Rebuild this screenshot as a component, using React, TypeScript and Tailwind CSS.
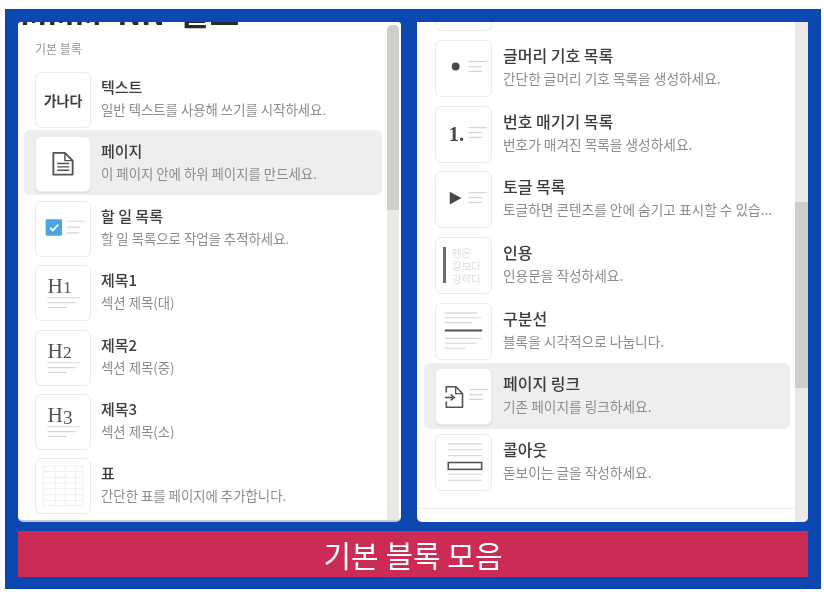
import React from "react";

const KR = "font-['Noto_Sans_CJK_KR','Noto_Sans',sans-serif]";

function Svg({ children }: { children: React.ReactNode }) {
  return (
    <svg viewBox="0 0 56 56" className="w-full h-full" fill="none">
      {children}
    </svg>
  );
}

function Lines({ x = 33 }: { x?: number }) {
  return (
    <g stroke="#d6d5d2" strokeWidth="1.2">
      <path d={`M${x} 21H${x + 19}`} />
      <path d={`M${x} 26H${x + 14}`} />
      <path d={`M${x} 31H${x + 14}`} />
    </g>
  );
}

function Heading({ n }: { n: string }) {
  return (
    <Svg>
      <text x="12" y="28" fontFamily="'Liberation Serif',serif" fontSize="22" fill="#55534f">
        H
        <tspan fontSize={n === "3" ? 20 : 18} dy={n === "3" ? 2 : 0}>
          {n}
        </tspan>
      </text>
      <g stroke="#d6d5d2" strokeWidth="1.1">
        <path d="M12 33H46" />
        <path d="M12 38H41" />
        <path d="M12 43H32" />
      </g>
    </Svg>
  );
}

const icons: Record<string, React.ReactNode> = {
  text: (
    <div className="w-full h-full flex items-center justify-center text-[14px] font-bold text-[#3f3e3a]">가나다</div>
  ),
  page: (
    <Svg>
      <path d="M18 16.5H30L38 24.5V39H18Z" stroke="#55534f" strokeWidth="1.9" strokeLinejoin="round" />
      <path d="M30 16.5V24.5H38" stroke="#55534f" strokeWidth="1.5" />
      <path d="M22 27.5H34.5M22 31H34.5M22 34.5H34.5" stroke="#55534f" strokeWidth="1.5" />
    </Svg>
  ),
  todo: (
    <Svg>
      <rect x="10" y="18" width="17" height="17" rx="1.5" fill="#4aa5e6" />
      <path d="M14.5 26.5L17.5 29.5L23 23.5" stroke="#fff" strokeWidth="1.8" />
      <g stroke="#d6d5d2" strokeWidth="1.2">
        <path d="M32 20H51M32 26H45M32 32H45" />
      </g>
    </Svg>
  ),
  h1: <Heading n="1" />,
  h2: <Heading n="2" />,
  h3: <Heading n="3" />,
  table: (
    <Svg>
      <g stroke="#eeeeec" strokeWidth="1">
        <rect x="7.5" y="7.5" width="41" height="41" />
        <path d="M7.5 13H48.5M7.5 19H48.5M7.5 25H48.5M7.5 31H48.5M7.5 37H48.5M7.5 43H48.5" />
        <path d="M20 7.5V48.5M30 7.5V48.5M41 7.5V48.5" />
      </g>
    </Svg>
  ),
  bullet: (
    <Svg>
      <circle cx="20" cy="26" r="4" fill="#4a4946" />
      <Lines />
    </Svg>
  ),
  number: (
    <Svg>
      <text x="13" y="35" fontFamily="'Liberation Serif',serif" fontWeight="700" fontSize="21" fill="#4a4946">1.</text>
      <Lines />
    </Svg>
  ),
  toggle: (
    <Svg>
      <path d="M14 20L26 26.5L14 33Z" fill="#4a4946" />
      <Lines />
    </Svg>
  ),
  quote: (
    <div className="relative w-full h-full">
      <div className="absolute left-[7px] top-[9px] w-[3px] h-[36px] bg-[#6e6d69]" />
      <div className="absolute left-[16px] top-[8px] text-[10.5px] leading-[13px] text-[#e0dfdd]">
        펜은<br />칼보다<br />강하다
      </div>
    </div>
  ),
  divider: (
    <Svg>
      <g stroke="#d6d5d2" strokeWidth="1.1">
        <path d="M9 9H42M9 14H46M9 19H37M9 35H46M9 40H41M9 45H30" />
      </g>
      <path d="M9 27H47" stroke="#55534f" strokeWidth="2" />
    </Svg>
  ),
  link: (
    <Svg>
      <path d="M10.5 24V18H20L27 25V39H10.5V33" stroke="#55534f" strokeWidth="1.6" strokeLinejoin="round" />
      <path d="M20 18V25H27" stroke="#55534f" strokeWidth="1.3" />
      <path d="M9 29H18M15 26L18.5 29L15 32" stroke="#55534f" strokeWidth="1.6" />
      <Lines x={34} />
    </Svg>
  ),
  callout: (
    <Svg>
      <g stroke="#d6d5d2" strokeWidth="1.1">
        <path d="M12 9H47M12 15H47M12 21H47M12 40H47M12 46H47" />
      </g>
      <rect x="12.5" y="28" width="34" height="7" stroke="#55534f" strokeWidth="1.6" />
    </Svg>
  ),
};

type Item = { icon: string; title: string; sub: string; active?: boolean };

const left: Item[] = [
  { icon: "text", title: "텍스트", sub: "일반 텍스트를 사용해 쓰기를 시작하세요." },
  { icon: "page", title: "페이지", sub: "이 페이지 안에 하위 페이지를 만드세요.", active: true },
  { icon: "todo", title: "할 일 목록", sub: "할 일 목록으로 작업을 추적하세요." },
  { icon: "h1", title: "제목1", sub: "섹션 제목(대)" },
  { icon: "h2", title: "제목2", sub: "섹션 제목(중)" },
  { icon: "h3", title: "제목3", sub: "섹션 제목(소)" },
  { icon: "table", title: "표", sub: "간단한 표를 페이지에 추가합니다." },
];

const right: Item[] = [
  { icon: "bullet", title: "글머리 기호 목록", sub: "간단한 글머리 기호 목록을 생성하세요." },
  { icon: "number", title: "번호 매기기 목록", sub: "번호가 매겨진 목록을 생성하세요." },
  { icon: "toggle", title: "토글 목록", sub: "토글하면 콘텐츠를 안에 숨기고 표시할 수 있습..." },
  { icon: "quote", title: "인용", sub: "인용문을 작성하세요." },
  { icon: "divider", title: "구분선", sub: "블록을 시각적으로 나눕니다." },
  { icon: "link", title: "페이지 링크", sub: "기존 페이지를 링크하세요.", active: true },
  { icon: "callout", title: "콜아웃", sub: "돋보이는 글을 작성하세요." },
];

function Row({ item, wide }: { item: Item; wide: boolean }) {
  return (
    <div
      className={
        "flex items-start pl-[11px] rounded-[6px] " +
        (wide ? "h-[65.7px] pt-[5.5px] gap-[11px] " : "h-[64.4px] pt-[6px] gap-[10px] ") +
        (item.active ? "bg-[#eeeeee]" : "bg-white")
      }
    >
      <div
        className={
          "shrink-0 bg-white border border-[#ebebea] rounded-[6px] overflow-hidden " +
          (wide ? "w-[57px] h-[57px] " : "w-[56px] h-[56px] ") +
          (item.active ? "shadow-[0_1px_2px_rgba(0,0,0,0.1)]" : "")
        }
      >
        {icons[item.icon]}
      </div>
      <div className={"flex flex-col min-w-0 " + (wide ? "pt-[4px]" : "pt-[3px]")}>
        <div
          className={
            "leading-[23px] font-medium text-[#3d3c38] whitespace-nowrap " +
            (wide ? "text-[16px]" : "text-[15px]")
          }
        >
          {item.title}
        </div>
        <div
          className={
            "leading-[23px] text-[#8e8d8a] whitespace-nowrap " +
            (wide ? "text-[13.7px]" : "text-[13.4px]")
          }
        >
          {item.sub}
        </div>
      </div>
    </div>
  );
}

export default function App() {
  return (
    <div className={"w-[824px] h-[592px] bg-white pt-[9px] pl-[5px] overflow-hidden blur-[0.5px] " + KR}>
      <div className="w-[816px] h-[580px] bg-[#0c48b0] pt-[13px] px-[13px] flex flex-col gap-[9px]">
        <div className="flex gap-[16px] h-[500px]">
          <div className="relative w-[383px] bg-white rounded-b-[5px] rounded-t-[3px] border-b-2 border-[#c3c8cf] flex overflow-hidden">
            <div className="absolute left-[2px] top-[-27px] text-[32px] leading-[32px] font-bold text-[#2b2a28] whitespace-nowrap [word-spacing:8px]">
              MMM NN 블로
            </div>
            <div className="flex-1 pl-[6px] pr-[5px] pt-[14px]">
              <div className="pl-[11px] text-[12px] leading-[25px] text-[#96958f] mb-[5px] h-[25px]">기본 블록</div>
              {left.map((it) => (
                <Row key={it.title} item={it} wide={false} />
              ))}
            </div>
            <div className="w-[12px] mr-[2px] mt-[3px] bg-[#eae9e5] rounded-t-[5px] shrink-0">
              <div className="h-[185px] bg-[#cfcec9] rounded-t-[5px]" />
            </div>
          </div>

          <div className="w-[391px] bg-white rounded-b-[5px] flex overflow-hidden">
            <div className="flex-1 flex flex-col">
              <div className="flex-1 pl-[7px] pr-[5px]">
                <div className="h-[12.5px] overflow-hidden flex items-end pl-[11px]">
                  <div className="w-[57px] h-[12px] mb-[4px] border border-t-0 border-[#ebebea] rounded-b-[6px] shrink-0" />
                </div>
                {right.map((it) => (
                  <Row key={it.title} item={it} wide />
                ))}
              </div>
              <div className="h-[14px] border-t border-[#eeeeec]" />
            </div>
            <div className="w-[13px] bg-[#eae9e5] shrink-0">
              <div className="h-[180px]" />
              <div className="h-[186px] bg-[#cfcec9]" />
            </div>
          </div>
        </div>

        <div className="w-[790px] h-[46px] bg-[#cb2b55] flex items-center justify-center text-white text-[30px] leading-none">
          기본 블록 모음
        </div>
      </div>
    </div>
  );
}
